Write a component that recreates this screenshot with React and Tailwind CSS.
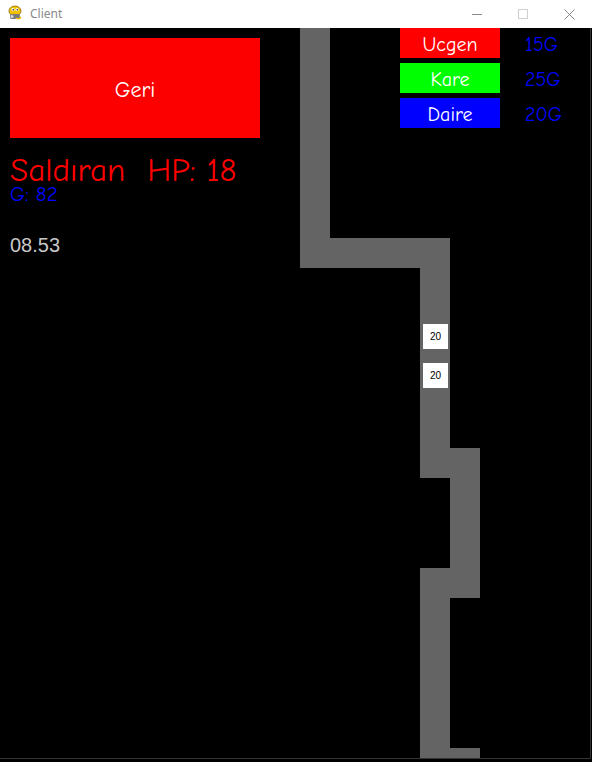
import React from "react";

const comic = { fontFamily: '"Comic Neue","Comic Sans MS","DejaVu Sans",sans-serif' };

const tiles = [
  [300, 0, 30, 240],
  [300, 210, 150, 30],
  [420, 210, 30, 240],
  [420, 420, 60, 30],
  [450, 420, 30, 150],
  [420, 540, 60, 30],
  [420, 540, 30, 190],
  [420, 720, 60, 10],
];

export default function App() {
  return (
    <div className="w-[592px] h-[762px] bg-white flex flex-col overflow-hidden">
      {/* Title bar */}
      <div className="h-[28px] flex items-center shrink-0 bg-white">
        <svg width="16" height="16" viewBox="0 0 16 16" className="ml-[7px] mt-[-2px]">
          <ellipse cx="8" cy="6" rx="6" ry="5" fill="#f2c200" stroke="#8a6a00" strokeWidth="0.8" />
          <circle cx="6" cy="4.5" r="1.6" fill="#fff" />
          <circle cx="10" cy="4.5" r="1.6" fill="#fff" />
          <circle cx="6.2" cy="4.8" r="0.7" fill="#000" />
          <circle cx="10.2" cy="4.8" r="0.7" fill="#000" />
          <rect x="3" y="9" width="10" height="5" rx="1.5" fill="#7a7a7a" />
          <circle cx="5" cy="11.5" r="1.5" fill="#d9d9d9" />
          <path d="M9 13 Q12 15 14 12" stroke="#f2c200" strokeWidth="1.5" fill="none" />
        </svg>
        <span className="ml-[7px] text-[12px] text-[#8a8a8a]" style={{ fontFamily: '"Noto Sans","Open Sans",sans-serif' }}>
          Client
        </span>
        <div className="ml-auto flex items-center h-full">
          <div className="w-[46px] h-full flex items-center justify-center">
            <div className="w-[10px] h-px bg-[#8a8a8a]" />
          </div>
          <div className="w-[46px] h-full flex items-center justify-center">
            <div className="w-[10px] h-[10px] border border-[#cfcfcf]" />
          </div>
          <div className="w-[46px] h-full flex items-center justify-center">
            <svg width="11" height="11" viewBox="0 0 11 11">
              <path d="M0.5 0.5 L10.5 10.5 M10.5 0.5 L0.5 10.5" stroke="#8a8a8a" strokeWidth="1" />
            </svg>
          </div>
        </div>
      </div>

      {/* Canvas */}
      <div className="relative flex-1 bg-black">
        <div className="absolute left-0 top-0 w-[590px] h-[730px] overflow-hidden">
          {tiles.map(([x, y, w, h], i) => (
            <div
              key={i}
              className="absolute bg-[#646464]"
              style={{ left: x, top: y, width: w, height: h }}
            />
          ))}

          {/* Enemies */}
          <div className="absolute left-[423px] top-[296px] w-[25px] h-[25px] bg-white flex items-center justify-center text-[10px] text-black" style={{ fontFamily: '"Liberation Sans",sans-serif' }}>20</div>
          <div className="absolute left-[423px] top-[335px] w-[25px] h-[25px] bg-white flex items-center justify-center text-[10px] text-black" style={{ fontFamily: '"Liberation Sans",sans-serif' }}>20</div>

          {/* Left HUD */}
          <div className="absolute left-[10px] top-[10px] flex flex-col">
            <button className="w-[250px] h-[100px] pt-[5px] bg-[#fc0000] text-white text-[22px] flex items-center justify-center" style={comic}>
              Geri
            </button>
            <div className="mt-[18px] text-[33px] leading-[28px] text-[#ff0000] whitespace-pre" style={comic}>
              {"Saldıran  HP: 18"}
            </div>
            <div className="mt-[1px] text-[21px] leading-[18px] text-[#0000ff]" style={comic}>
              G: 82
            </div>
            <div className="mt-[31px] text-[20px] leading-[22px] text-[#c8c8c8]" style={{ fontFamily: '"Liberation Sans",Arial,sans-serif' }}>
              08.53
            </div>
          </div>

          {/* Shop */}
          <div className="absolute left-[400px] top-0 flex flex-col gap-[5px]">
            {[
              ["Ucgen", "bg-[#ff0000]", "15G"],
              ["Kare", "bg-[#00ff00]", "25G"],
              ["Daire", "bg-[#0000ff]", "20G"],
            ].map(([name, bg, price]) => (
              <div key={name} className="flex items-center h-[30px]">
                <div className={`w-[100px] h-[30px] pt-[3px] leading-[24px] ${bg} text-white text-[20px] flex items-center justify-center`} style={comic}>
                  {name}
                </div>
                <div className="ml-[25px] pt-[3px] leading-[24px] text-[20px] text-[#0000ff]" style={comic}>{price}</div>
              </div>
            ))}
          </div>
        </div>
        <div className="absolute left-0 top-[730px] w-[590px] h-px bg-[#333]" />
        <div className="absolute left-[590px] top-0 w-px h-[731px] bg-[#333]" />
      </div>
    </div>
  );
}
